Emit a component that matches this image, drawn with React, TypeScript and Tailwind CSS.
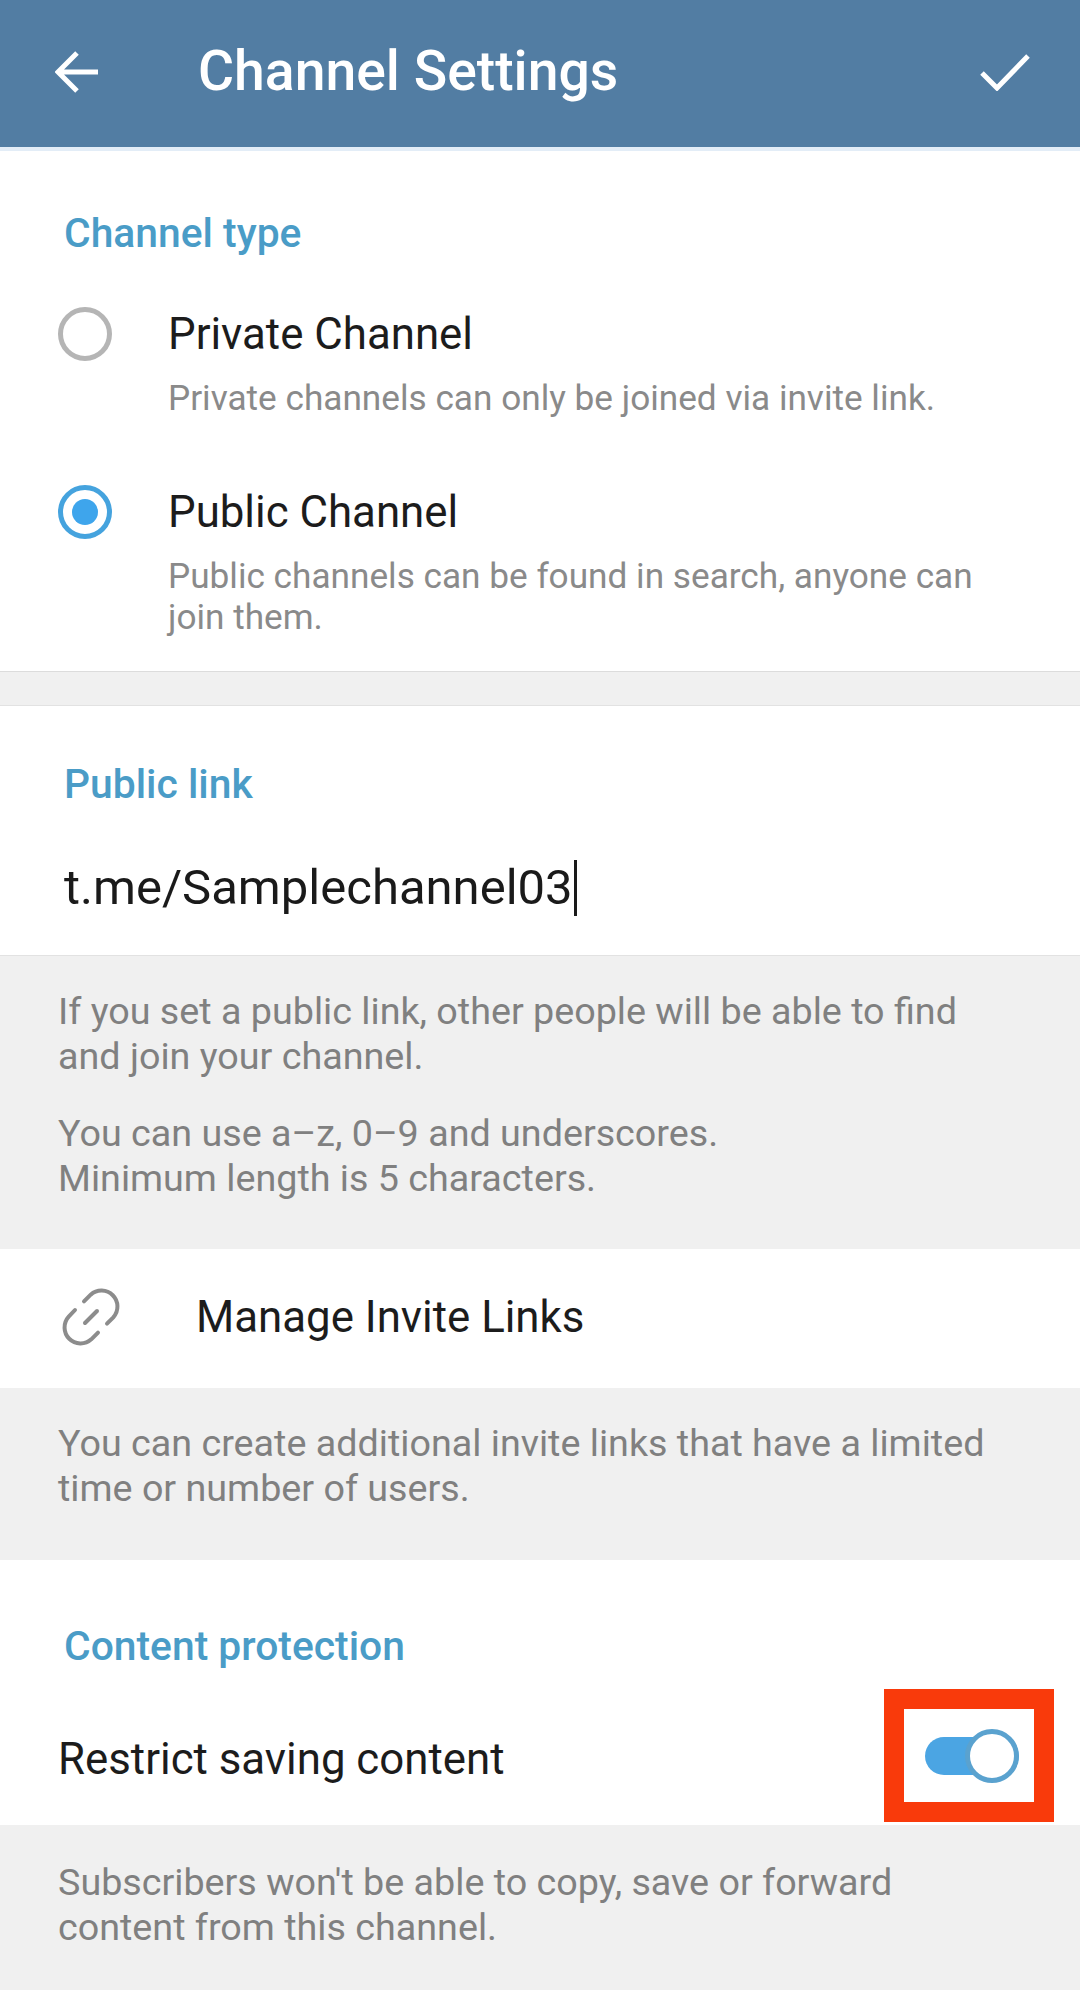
import React from "react";

const Heading = ({ children, className = "" }: { children: React.ReactNode; className?: string }) => (
  <div className={`pl-[64px] text-[40.8px] leading-[44px] font-medium text-[#4a9cc7] ${className}`}>{children}</div>
);

const Radio = ({ on }: { on?: boolean }) => (
  <div className={`flex h-[54px] w-[54px] shrink-0 items-center justify-center rounded-full border-[5px] ${on ? "border-[#45a3de]" : "border-[#b5b5b5]"}`}>
    {on && <div className="h-[26px] w-[26px] rounded-full bg-[#3ea5ec]" />}
  </div>
);

const Info = ({ children, className = "" }: { children: React.ReactNode; className?: string }) => (
  <div className={`pl-[58px] pr-[72px] text-[37.7px] leading-[45px] text-[#808080] ${className}`}>{children}</div>
);

export default function App() {
  return (
    <div className="flex h-[1990px] w-[1080px] flex-col overflow-hidden bg-[#f0f0f0] font-['Roboto',sans-serif]">
      <header className="flex h-[147px] items-center bg-[#527da3] pb-[4px] pl-[55px] pr-[50px] text-white">
        <svg width="44" height="42" viewBox="0 0 44 42" fill="none" stroke="white" strokeWidth="5" className="shrink-0">
          <path d="M22 2 3 21l19 19M3 21h40" />
        </svg>
        <div className="ml-[99px] flex-1 text-[55.3px] font-medium leading-[60px]">Channel Settings</div>
        <svg width="50" height="38" viewBox="0 0 50 38" fill="none" stroke="white" strokeWidth="5" className="shrink-0">
          <path d="M2 20 17 35 48 3" />
        </svg>
      </header>
      <div className="h-[4px] bg-[#e3edf7]" />

      <section className="h-[521px] border-b border-[#dcdcdc] bg-white pt-[60px]">
        <Heading>Channel type</Heading>
        <div className="mt-[52px] flex pl-[58px]">
          <Radio />
          <div className="ml-[56px]">
            <div className="text-[43.8px] leading-[54px] text-[#1c1c1c]">Private Channel</div>
            <div className="mt-[17px] w-[850px] text-[35.2px] leading-[41px] text-[#8a8a8a]">Private channels can only be joined via invite link.</div>
          </div>
        </div>
        <div className="mt-[66px] flex pl-[58px]">
          <Radio on />
          <div className="ml-[56px]">
            <div className="text-[43.8px] leading-[54px] text-[#1c1c1c]">Public Channel</div>
            <div className="mt-[17px] w-[850px] text-[35.2px] leading-[41px] text-[#8a8a8a]">Public channels can be found in search, anyone can join them.</div>
          </div>
        </div>
      </section>

      <div className="h-[33px]" />

      <section className="h-[251px] border-t border-b border-[#e2e2e2] bg-white pt-[56px]">
        <Heading>Public link</Heading>
        <div className="mt-[52px] flex items-center pl-[64px] text-[49px] leading-[60px] text-[#1a1a1a]">
          t.me/Samplechannel03
          <span className="ml-[1px] h-[56px] w-[3px] bg-[#1a1a1a]" />
        </div>
      </section>

      <div className="h-[293px] pt-[33px]">
        <Info>If you set a public link, other people will be able to find and join your channel.</Info>
        <Info className="mt-[32px]">You can use a–z, 0–9 and underscores.<br />Minimum length is 5 characters.</Info>
      </div>

      <section className="flex h-[139px] items-center bg-white pb-[4px] pl-[60px]">
        <svg width="62" height="62" viewBox="0 0 62 62" fill="none" stroke="#8c8c8c" strokeWidth="4" strokeLinecap="round" className="shrink-0">
          <path d="M24 15.400 30.700 8.700A16 16 0 0 1 53.300 31.300L47 37.600" />
          <path d="M15 24 8.700 30.700A16 16 0 0 0 31.300 53.300L38 46.600" />
          <path d="M25 37 37 25" />
        </svg>
        <div className="ml-[74px] text-[43.8px] leading-[50px] text-[#1c1c1c]">Manage Invite Links</div>
      </section>

      <div className="h-[172px] pt-[33px]">
        <Info>You can create additional invite links that have a limited time or number of users.</Info>
      </div>

      <section className="relative h-[265px] bg-white pt-[64px]">
        <Heading>Content protection</Heading>
        <div className="mt-[64px] pl-[58px] text-[43.8px] leading-[54px] text-[#1c1c1c]">Restrict saving content</div>
        <div className="absolute left-[884px] top-[129px] flex h-[133px] w-[170px] items-center justify-center border-[20px] border-[#f93a0b]">
          <div className="relative ml-[5px] h-[38px] w-[94px] rounded-full bg-[#4ba5e3]">
            <div className="absolute -top-[8px] right-0 h-[54px] w-[54px] rounded-full border-[5px] border-[#5aa2cf] bg-white" />
          </div>
        </div>
      </section>

      <div className="pt-[35px]">
        <Info>Subscribers won't be able to copy, save or forward content from this channel.</Info>
      </div>
    </div>
  );
}
